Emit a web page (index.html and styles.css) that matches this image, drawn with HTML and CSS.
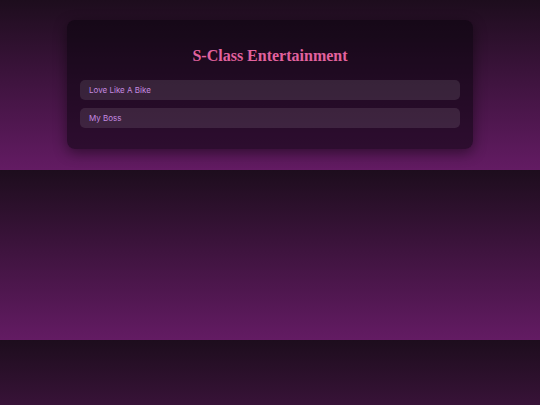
FILE: index.html
```html
<!DOCTYPE html>
<html lang="en">
<head>
    <meta charset="UTF-8">
    <meta name="viewport" content="width=device-width, initial-scale=1.0">
    <title>S-Class Entertainment</title>
    <link rel="stylesheet" href="styles.css">
</head>
<body>
    <div class="panel">
        <h1 class="titulo">S-Class Entertainment</h1>
        <ul class="canciones">
            <li class="cancion">Love Like A Bike</li>
            <li class="cancion">My Boss</li>
        </ul>
    </div>
</body>
</html>
```

FILE: styles.css
```css
body{
    margin: 0;
    padding: 20px 0 21px;
    background: linear-gradient(to bottom, #1d0d1d, #631b63);
    font-family: "Inter", "Liberation Sans", sans-serif;
}
.panel{
    width: 380px;
    margin: 0 auto;
    padding: 26px 13px 21px;
    border-radius: 8px;
    background-color: rgba(10, 4, 12, 0.55);
    box-shadow: 0 4px 14px rgba(0, 0, 0, 0.45);
}
.titulo{
    margin: 0 0 14px;
    font-family: "Liberation Serif", serif;
    font-weight: bold;
    font-size: 16px;
    line-height: 20px;
    text-align: center;
    color: #e2629e;
}
.canciones{
    list-style: none;
    margin: 0;
    padding: 0;
    display: flex;
    flex-direction: column;
    gap: 8px;
}
.cancion{
    height: 20px;
    line-height: 20px;
    padding: 0 9px;
    border-radius: 5px;
    background-color: rgba(255, 255, 255, 0.1);
    font-size: 8px;
    color: #c58ae0;
}
```
